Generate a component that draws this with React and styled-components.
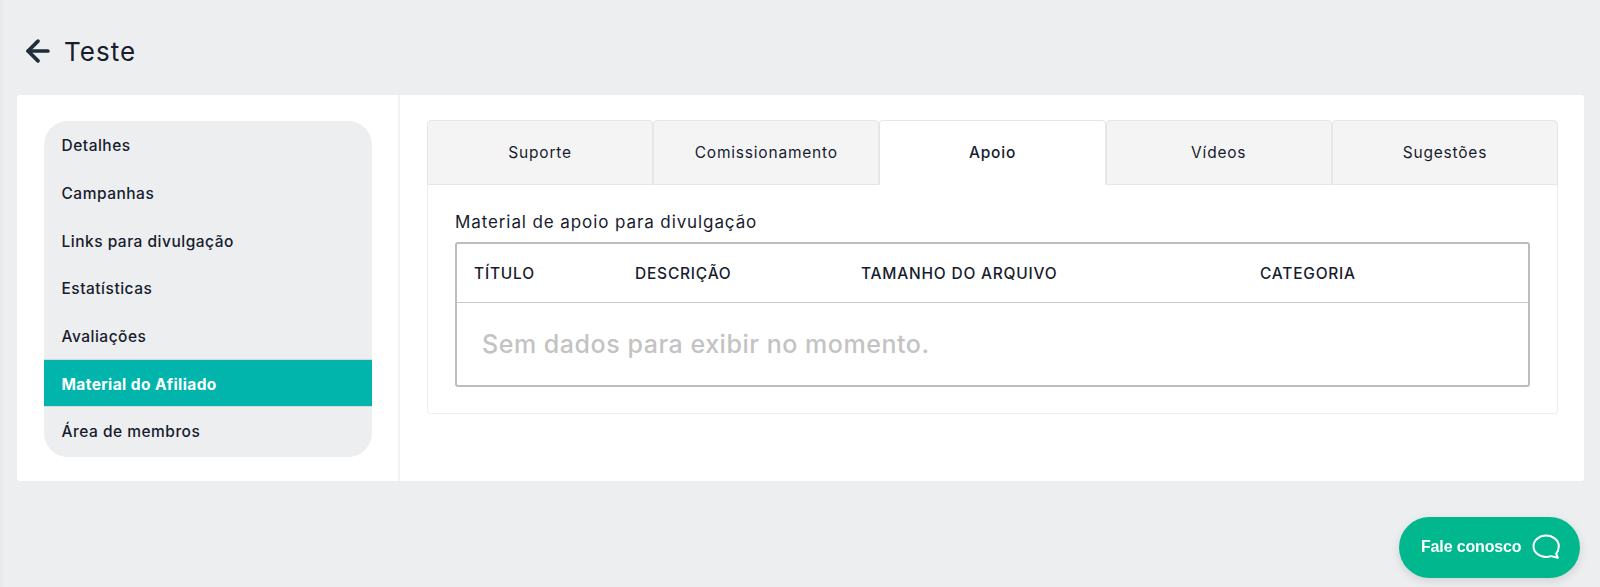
import React from 'react'
import styled, { createGlobalStyle } from 'styled-components'
import { ArrowLeft } from 'lucide-react'

const GlobalStyle = createGlobalStyle`
  html, body {
    margin: 0;
    height: 100%;
    background: #edeef0;
    overflow: hidden;
  }
  * {
    box-sizing: border-box;
  }
`

const Page = styled.div`
  height: 587px;
  padding: 0 16px 0 14px;
  border-left: 3px solid #e9eaed;
  font-family: Inter, "Open Sans", sans-serif;
  color: #171c2e;
`

const Header = styled.header`
  height: 95px;
  padding: 35px 0 0 4px;
  display: flex;
  align-items: flex-start;
  gap: 9px;
  color: #1f2d3d;
`

const BackArrow = styled(ArrowLeft)`
  margin-top: -1px;
`

const Title = styled.h1`
  margin: 3px 0 0;
  font-size: 26px;
  line-height: 28px;
  font-weight: 400;
  letter-spacing: 1px;
  color: #171c2e;
`

const Card = styled.main`
  height: 386px;
  background: #fff;
  border-radius: 3px;
  display: flex;
`

const Aside = styled.aside`
  width: 383px;
  padding: 26px 26.5px;
  border-right: 2px solid #f1f2f4;
`

const Menu = styled.nav`
  height: 336px;
  background: #edeef0;
  border-radius: 24px;
  overflow: hidden;
`

const MenuItem = styled.a`
  display: flex;
  align-items: center;
  height: 47.7px;
  padding: 2px 0 0 18px;
  font-size: 15.5px;
  font-weight: ${p => (p.$active ? 700 : 500)};
  color: ${p => (p.$active ? '#fff' : '#171c2e')};
  background: ${p => (p.$active ? '#02b5ac' : 'transparent')};
  border-top: 1px solid ${p => (p.$active ? '#cfdcdc' : 'transparent')};
  border-bottom: 1px solid ${p => (p.$active ? '#cfdcdc' : 'transparent')};
  letter-spacing: ${p => (p.$active ? '0.4px' : '0.5px')};
`

const Content = styled.section`
  flex: 1;
  padding: 25px 26px 0 27px;
`

const TabList = styled.div`
  display: flex;
  height: 65px;
`

const Tab = styled.div`
  flex: 1;
  display: flex;
  align-items: center;
  justify-content: center;
  font-size: 15.5px;
  font-weight: ${p => (p.$active ? 500 : 400)};
  letter-spacing: 0.8px;
  color: #171c2e;
  background: ${p => (p.$active ? '#fff' : '#f4f4f4')};
  border: 1px solid #e6e6e6;
  border-bottom: ${p => (p.$active ? '1px solid #fff' : '1px solid #e6e6e6')};
  border-radius: 4px 4px 0 0;
`

const TabPanel = styled.div`
  height: 229px;
  padding: 27px 27px 0;
  border: 1px solid #eceded;
  border-top: none;
  border-radius: 0 0 4px 4px;
`

const PanelTitle = styled.h2`
  margin: 0 0 10px;
  font-size: 17px;
  line-height: 20px;
  font-weight: 400;
  letter-spacing: 0.9px;
  color: #171c2e;
`

const Table = styled.div`
  height: 145px;
  border: 2px solid #bdbdbd;
  border-radius: 3px;
`

const HeadRow = styled.div`
  display: flex;
  height: 59px;
  align-items: center;
  padding-left: 17px;
  border-bottom: 1px solid #c8c8c8;
`

const HeadCell = styled.div`
  width: ${p => p.$width}px;
  font-size: 15.5px;
  font-weight: 500;
  letter-spacing: 0.78px;
  color: #171c2e;
`

const EmptyRow = styled.div`
  padding: 26px 0 0 25px;
  font-size: 25px;
  line-height: 30px;
  letter-spacing: 0.54px;
  color: #c3c3c3;
  font-weight: 500;
`

const ChatButton = styled.button`
  position: fixed;
  left: 1399px;
  top: 517px;
  width: 181px;
  height: 61px;
  border: none;
  border-radius: 31px;
  background: #00b78e;
  box-shadow: 0 3px 10px rgba(0, 0, 0, 0.12);
  color: #fff;
  display: flex;
  align-items: center;
  padding: 0 0 2px 22px;
  gap: 11px;
  font-family: "Liberation Sans", Arial, sans-serif;
  font-weight: 700;
  font-size: 16px;
  letter-spacing: -0.15px;
`

const ChatIcon = () => (
  <svg width="28" height="25" viewBox="0 0 28 25" fill="none">
    <path
      d="M14 1.500C7 1.500 1.500 6.300 1.500 12.200S7 23 14 23c1.800 0 3.500-.3 5-.9l6.800 1.700-1.600-4.200c1.600-1.900 2.600-4.500 2.600-7.400C26.800 6.300 21 1.500 14 1.500Z"
      stroke="#fff"
      strokeWidth="2"
      strokeLinejoin="round"
    />
  </svg>
)

const menu = ['Detalhes', 'Campanhas', 'Links para divulgação', 'Estatísticas', 'Avaliações', 'Material do Afiliado', 'Área de membros']
const tabs = ['Suporte', 'Comissionamento', 'Apoio', 'Vídeos', 'Sugestões']
const columns = [
  ['TÍTULO', 161],
  ['DESCRIÇÃO', 226],
  ['TAMANHO DO ARQUIVO', 399],
  ['CATEGORIA', 200],
]

export default function App() {
  return (
    <Page>
      <GlobalStyle />
      <Header>
        <BackArrow size={34} strokeWidth={2.6} />
        <Title>Teste</Title>
      </Header>
      <Card>
        <Aside>
          <Menu>
            {menu.map(item => (
              <MenuItem key={item} $active={item === 'Material do Afiliado'}>{item}</MenuItem>
            ))}
          </Menu>
        </Aside>
        <Content>
          <TabList>
            {tabs.map(tab => (
              <Tab key={tab} $active={tab === 'Apoio'}>{tab}</Tab>
            ))}
          </TabList>
          <TabPanel>
            <PanelTitle>Material de apoio para divulgação</PanelTitle>
            <Table>
              <HeadRow>
                {columns.map(([label, width]) => (
                  <HeadCell key={label} $width={width}>{label}</HeadCell>
                ))}
              </HeadRow>
              <EmptyRow>Sem dados para exibir no momento.</EmptyRow>
            </Table>
          </TabPanel>
        </Content>
      </Card>
      <ChatButton>
        Fale conosco
        <ChatIcon />
      </ChatButton>
    </Page>
  )
}
